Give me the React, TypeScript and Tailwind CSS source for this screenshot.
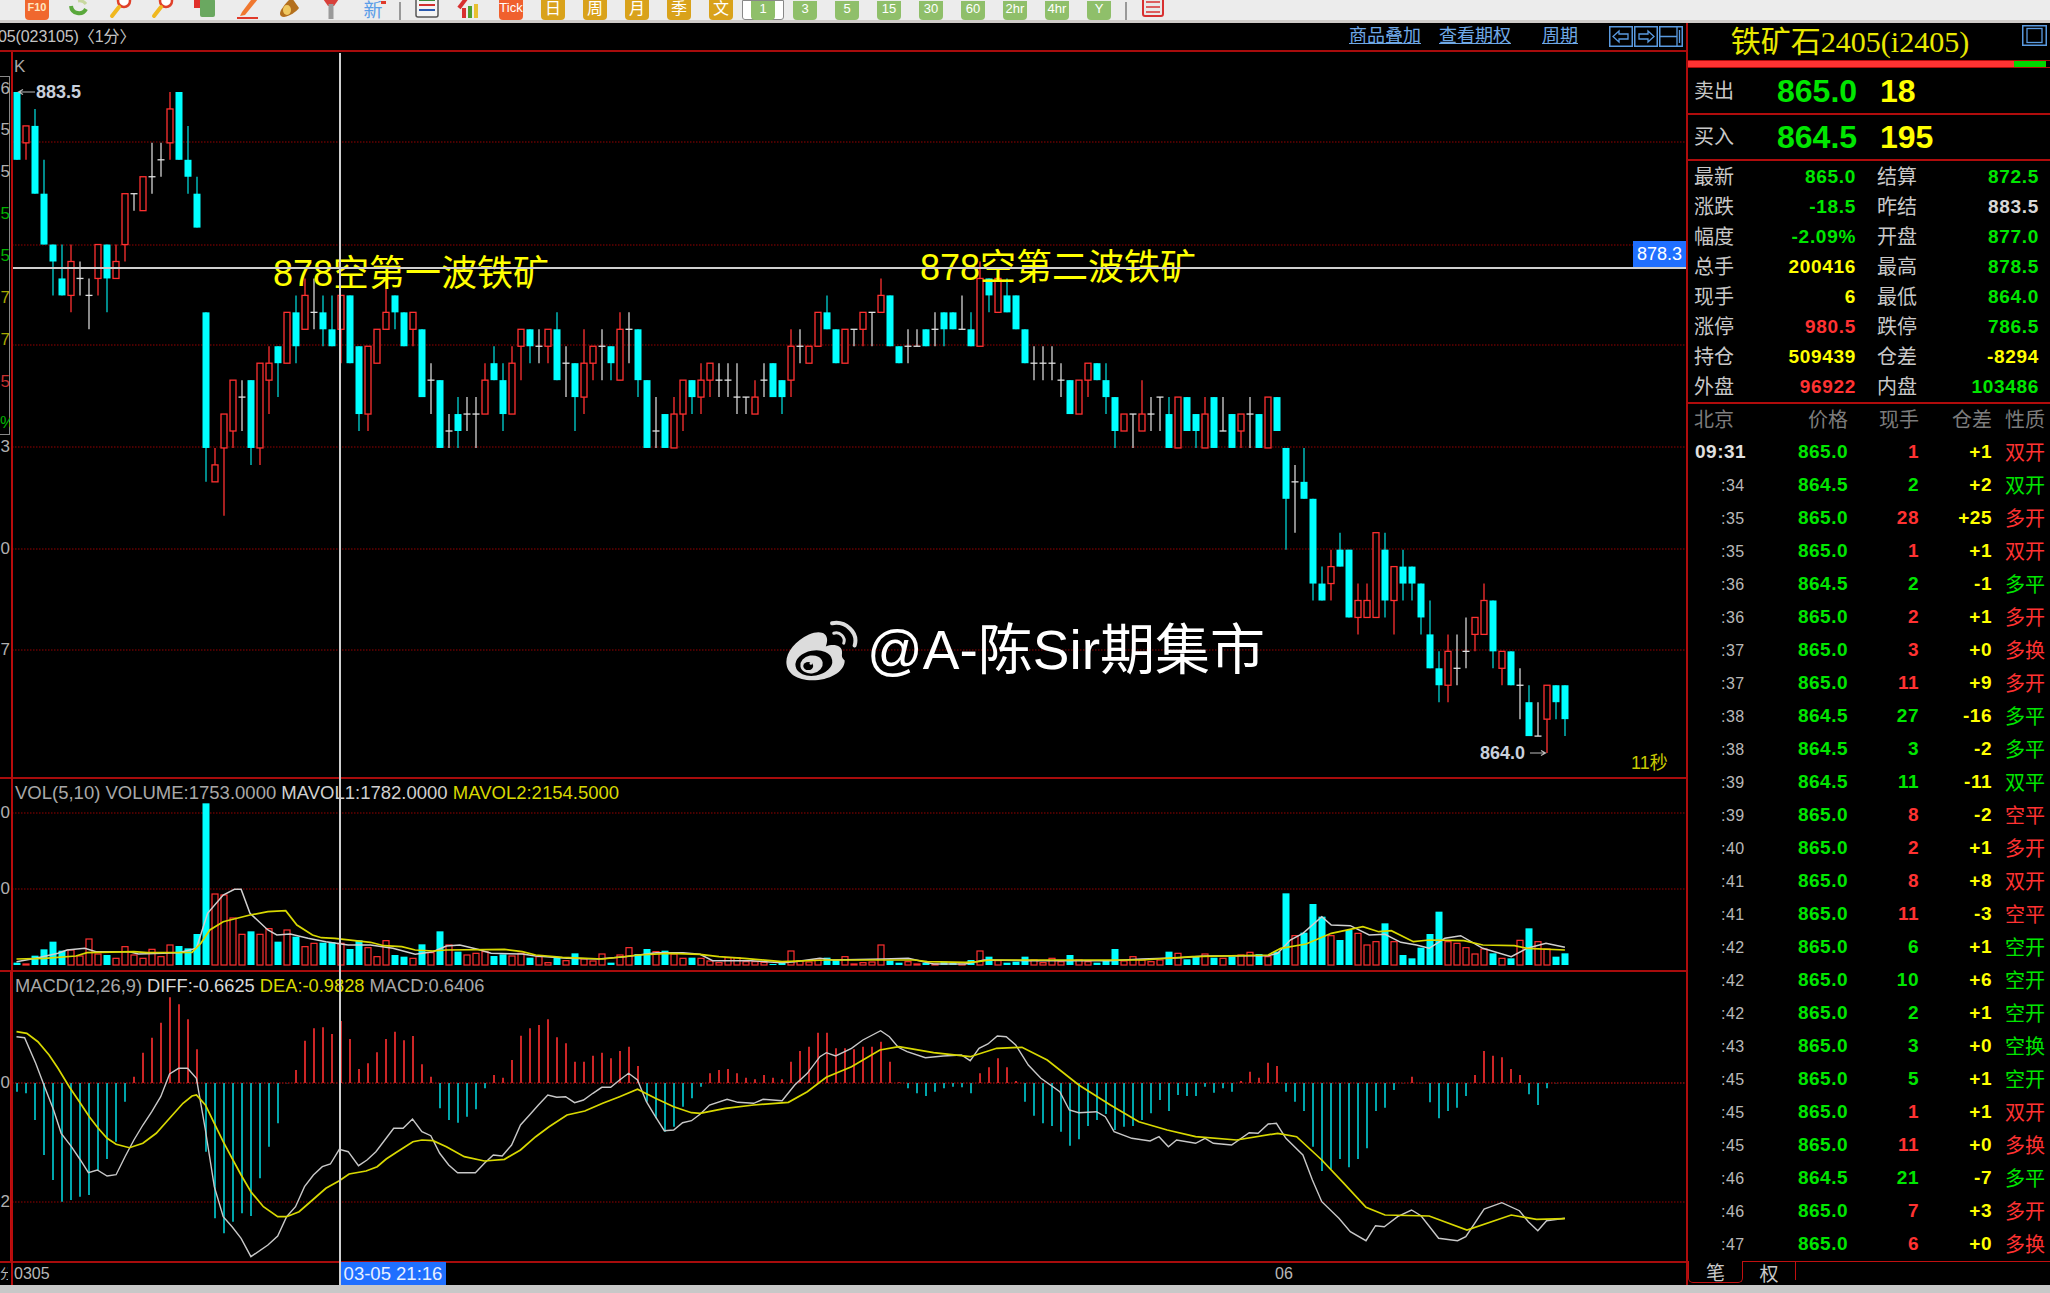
import type { ReactNode } from 'react';

type Candle = [string, number, number, number?, number?];

// body top, body bottom, wick top, wick bottom, all in 0.5-price ticks below 883.5
const candles: Candle[] = [
  ['c',0,4],['r',2,3,2,4],['c',2,6,1,6],['c',6,9,4,9],['c',9,10,9,12],['c',11,12,9,12],['r',10,12,9,13],['w',11,11,10,12],['w',12,12,11,14],['r',9,11,9,12],
  ['c',9,11,9,13],['r',10,11,9,11],['r',6,9,6,10],['w',6,6,6,7],['r',5,7],['w',5,5,3,6],['w',4,4,3,5],['r',1,3,0,4],['c',0,4],['c',4,5,2,6],
  ['c',6,8,5,8],['c',13,21,13,23],['r',22,23,21,23],['r',19,21,19,25],['r',17,20,17,21],['w',18,18,17,20],['c',17,21,17,22],['r',16,21,16,22],['r',16,17,15,19],['c',15,16,15,18],
  ['r',13,16],['c',13,15,12,16],['r',12,14,11,14],['w',13,13,11,14],['c',13,14,12,15],['c',14,15,12,15],['r',12,14,12,16],['c',12,16],['c',15,19,15,20],['r',15,19,15,20],
  ['r',14,16],['r',13,14,11,14],['c',12,13,12,14],['c',13,15],['r',13,14,13,15],['c',14,18],['w',17,17,16,19],['c',17,21],['w',20,20,19,21],['c',19,20,18,21],
  ['w',19,19,18,20],['w',19,19,18,21],['r',17,19,16,19],['c',16,17,15,17],['c',17,19,16,20],['r',16,19,15,19],['r',14,15,14,17],['c',14,15,14,16],['w',15,15,14,16],['r',14,15,14,16],
  ['c',14,17,13,17],['w',16,16,15,18],['c',16,18,16,20],['r',16,18,14,19],['r',15,16,15,17],['w',15,15,14,17],['c',15,16,15,17],['r',14,17,13,17],['w',14,14,13,16],['c',14,17,14,18],
  ['c',17,21],['w',20,20,18,21],['c',19,21],['r',19,21,18,21],['r',17,19,17,20],['c',17,18,17,19],['r',17,18,16,19],['r',16,17,16,18],['w',17,17,16,18],['w',17,17,16,18],
  ['w',18,18,16,19],['w',18,18,18,19],['r',18,19,17,19],['w',17,17,16,18],['c',16,18],['c',17,18,17,19],['r',15,17,14,18],['w',15,15,14,16],['r',15,16],['r',13,15],
  ['c',13,14,12,14],['c',14,16],['r',14,16],['w',14,14,14,15],['r',13,14,13,15],['w',13,13,13,15],['r',12,13,11,13],['c',12,15],['c',15,16],['w',15,15,14,16],
  ['w',15,15,14,15],['c',14,15],['w',14,14,13,15],['c',13,14,13,15],['c',13,14],['w',14,14,12,14],['c',14,15,13,15],['r',11,15,10,15],['c',11,12,11,13],['r',11,13],
  ['c',12,13,11,13],['c',12,14],['c',14,16],['w',16,16,15,17],['w',16,16,15,17],['w',16,16,15,17],['w',17,17,16,18],['c',17,19],['r',17,19],['r',16,17,16,18],
  ['c',16,17],['c',17,18,16,19],['c',18,20,18,21],['r',19,20],['w',19,19,19,21],['r',19,20,17,20],['w',19,19,18,20],['w',18,18,18,20],['c',19,21,18,21],['r',18,21],
  ['c',18,20],['c',19,20,19,21],['r',19,21,18,21],['c',18,21],['w',20,20,18,20],['c',19,21],['r',19,20,19,21],['w',19,19,18,21],['c',19,21],['r',18,21],
  ['c',18,20],['c',21,24,21,27],['w',23,23,22,26],['c',23,24,21,24],['c',24,29,24,30],['c',29,30,28,30],['r',28,29,27,30],['c',27,28,26,28],['c',27,31],['r',30,31,29,32],
  ['r',30,31,29,31],['r',26,31],['c',27,30,26,31],['r',28,30,28,32],['c',28,29,27,30],['c',28,29,28,30],['c',29,31,29,32],['c',32,34,30,34],['c',34,35,33,36],['r',33,35,32,36],
  ['w',34,34,32,35],['w',33,33,31,34],['r',31,32,31,33],['r',30,32,29,32],['c',30,33,30,34],['r',33,34,33,35],['c',33,35],['w',35,35,34,37],['c',36,38,35,38],['w',38,38,36,38],
  ['r',35,37,35,39],['c',35,36,35,37],['c',35,37,35,38],
];

// tops of the volume bars and the tips of the MACD bars, read off the reference
const volTops = [
  578,582,557,538,515,542,540,558,507,552,555,565,530,555,565,538,560,525,528,535,492,100,372,375,444,493,484,493,476,515,
  480,500,530,520,518,517,520,537,511,533,560,512,555,560,565,523,548,484,525,545,555,550,545,558,553,558,550,563,560,578,
  563,572,550,567,573,552,578,555,533,552,537,545,542,552,565,563,565,573,578,563,563,575,575,577,582,578,543,572,576,570,
  563,570,560,582,578,576,525,572,578,575,582,578,582,575,578,578,570,543,560,572,578,575,560,570,578,565,575,555,570,575,
  578,572,537,573,560,570,575,570,545,550,568,560,552,563,565,560,555,547,552,560,545,370,497,488,402,440,497,510,480,490,
  525,515,460,515,555,565,533,492,425,515,520,533,552,537,550,565,565,511,475,515,537,560,550,
];

const macdTips = [
  365,370,450,555,630,695,690,680,675,600,567,515,395,320,248,203,158,82,103,148,238,545,745,790,755,730,738,625,530,460,
  340,300,212,175,172,192,153,207,297,280,247,207,185,211,198,283,320,415,450,458,440,418,355,315,323,270,197,175,165,148,
  202,220,275,275,257,248,265,243,230,288,395,445,485,470,410,385,350,310,300,297,310,323,328,315,323,328,275,243,230,188,
  188,235,235,238,230,230,215,275,337,355,370,378,365,355,350,352,370,310,292,265,292,333,395,437,460,468,485,527,508,468,
  450,432,480,470,468,450,430,390,423,375,378,378,350,368,355,365,333,305,323,278,288,365,395,423,530,603,597,567,592,567,
  535,423,413,360,340,320,340,397,445,423,413,378,315,243,257,262,297,315,373,405,355,340,338,
];

// MA lines, traced from the reference crops: pairs of crop x, crop y
const volWhiteA = [37,575,80,565,130,550,150,540,190,535,215,545,290,545,310,552,400,548,440,535,465,430,500,375,525,358,540,358,560,430,600,480,620,495,650,492,690,505,730,515,780,525,830,525,880,535,930,553,970,545,1000,528,1030,525,1070,538,1100,550,1170,552,1200,558,1270,565,1340,567,1400,560,1470,548,1530,548,1568,553];
const volYellowA = [37,567,100,565,170,558,195,548,300,545,330,548,430,547,450,520,470,480,500,455,560,435,600,425,640,422,665,465,700,495,720,503,750,505,830,517,860,527,900,530,930,540,970,543,1000,540,1130,538,1170,545,1200,555,1260,562,1350,567,1430,555,1500,550,1568,553];
const volWhiteB = [0,565,20,572,80,572,130,578,150,575,190,565,210,570,290,567,330,565,370,582,420,582,450,570,520,572,650,572,700,567,760,563,800,558,900,557,915,550,935,510,955,490,985,440,1000,465,1030,467,1060,495,1085,493,1110,517,1135,525,1155,535,1180,505,1205,497,1240,535,1285,560,1310,535,1340,520,1370,532];
const volYellowB = [0,552,30,560,70,565,130,575,200,570,340,570,360,575,420,577,440,575,460,570,700,570,780,560,900,555,920,535,960,522,1000,490,1050,470,1075,485,1095,482,1130,515,1155,510,1210,512,1240,525,1290,527,1310,535,1370,540];
const macdWhiteA = [37,200,55,203,80,280,100,350,120,420,137,490,160,530,180,570,198,608,218,600,240,618,260,614,280,560,300,510,320,465,340,425,360,380,380,312,400,295,420,295,440,325,460,480,480,650,500,740,520,770,540,805,562,860,600,825,622,798,642,740,662,710,682,650,702,615,722,590,740,582,760,538,780,545,803,587,822,570,842,545,862,510,882,475,903,475,924,447,945,485,965,497,985,550,1005,585,1025,608,1065,608,1085,580,1105,555,1125,558,1146,525,1166,465,1186,435,1206,405,1227,375,1247,382,1267,380,1287,398,1307,390,1328,370,1348,352,1368,352,1388,330,1408,310,1428,330,1448,395,1468,440,1488,482,1509,480,1529,458,1549,452,1568,433];
const macdYellowA = [37,185,60,190,85,215,110,255,130,295,155,350,180,400,200,440,220,475,240,505,260,523,290,533,320,520,350,490,380,445,410,400,430,378,440,375,460,405,480,460,500,515,520,565,540,615,562,665,590,710,622,740,642,740,670,725,700,690,730,655,760,632,782,612,820,603,845,590,865,567,890,545,925,515,945,510,970,512,1000,530,1040,560,1085,573,1130,568,1166,540,1200,500,1230,470,1270,435,1310,423,1350,400,1388,380,1428,358,1468,385,1509,410,1549,428,1568,430];
const macdWhiteB = [0,435,15,405,43,388,60,397,85,400,100,388,130,392,150,345,170,310,190,260,200,248,215,258,240,235,258,210,286,182,300,200,314,232,328,245,357,263,385,258,414,255,428,272,442,235,456,222,471,198,485,200,500,225,520,285,540,325,570,365,585,420,600,428,628,425,642,440,656,485,684,505,713,513,727,500,742,530,755,510,785,520,800,505,813,520,842,525,870,488,884,490,900,462,913,460,928,505,955,555,970,630,985,695,1012,745,1030,785,1055,812,1070,767,1084,770,1105,740,1127,720,1142,737,1170,805,1200,812,1213,800,1242,717,1270,698,1298,722,1312,755,1327,782,1341,752,1370,745];
const macdYellowB = [0,430,40,415,85,405,140,397,170,365,200,322,240,290,285,240,315,230,370,248,428,260,470,235,510,232,550,270,600,345,650,405,695,455,740,480,785,500,850,510,915,490,945,500,985,570,1020,640,1055,712,1085,735,1155,738,1215,780,1285,735,1325,748,1370,746];

const barX = (i: number) => Math.round(16.6 + 9 * i);
const tickY = (n: number) => 92 + 16.95 * n;

function tracePoints(a: number[], b: number[], top: number) {
  const out: string[] = [];
  for (let i = 0; i < a.length; i += 2) out.push(`${(a[i] / 2.24).toFixed(1)},${(top + a[i + 1] / 3).toFixed(1)}`);
  for (let i = 0; i < b.length; i += 2) {
    const x = 700 + b[i] / 1.584;
    if (x > 700) out.push(`${x.toFixed(1)},${(top + b[i + 1] / 3).toFixed(1)}`);
  }
  return out.join(' ');
}

function GridLine({ y }: { y: number }) {
  return <line x1={12} x2={1686} y1={y} y2={y} stroke="#960000" strokeWidth={1} strokeDasharray="1.5 1.5" />;
}

function KPane() {
  const wickColor: Record<string, string> = { c: '#00d4d4', r: '#ff3030', w: '#d4d4d4' };
  return (
    <svg viewBox="0 52 1686 725" className="absolute inset-0 w-[1686px] h-[725px]">
      {[142, 245, 345, 447, 549, 650].map((y) => <GridLine key={y} y={y} />)}
      {candles.map(([t, top, bot, wt, wb], i) => {
        const x = barX(i);
        const y1 = tickY(top);
        const y2 = tickY(bot);
        const upper = tickY(wt ?? top);
        const lower = tickY(wb ?? bot);
        return (
          <g key={i}>
            <line x1={x} x2={x} y1={upper} y2={lower} stroke={wickColor[t]} strokeWidth={1.3} />
            {t === 'c' && <rect x={x - 3.5} y={y1} width={7} height={y2 - y1} fill="#00ffff" />}
            {t === 'r' && <rect x={x - 3} y={y1} width={6} height={y2 - y1} fill="#000" stroke="#ff3030" strokeWidth={1.3} />}
            {t === 'w' && <line x1={x - 3.5} x2={x + 3.5} y1={y1} y2={y1} stroke="#e0e0e0" strokeWidth={1.3} />}
          </g>
        );
      })}
      <path d="M35 92H19M23 89.5L18.5 92L23 94.5" fill="none" stroke="#bbb" strokeWidth={1.2} />
      <path d="M1530 753H1545M1541 750.5L1545.5 753L1541 755.5" fill="none" stroke="#bbb" strokeWidth={1.2} />
    </svg>
  );
}

function VolumePane() {
  return (
    <svg viewBox="0 779 1686 191" className="absolute inset-0 w-[1686px] h-[191px]">
      {[813, 889].map((y) => <GridLine key={y} y={y} />)}
      {candles.map(([t], i) => {
        const top = 770 + (volTops[i] ?? 585) / 3;
        const x = barX(i);
        return t === 'c' ? (
          <rect key={i} x={x - 3.5} y={top} width={7} height={965 - top} fill="#00ffff" />
        ) : (
          <rect key={i} x={x - 3} y={top} width={6} height={965 - top} fill="#000" stroke="#ff3030" strokeWidth={1.2} />
        );
      })}
      <polyline points={tracePoints(volWhiteA, volWhiteB, 770)} fill="none" stroke="#d0d0d0" strokeWidth={1.5} />
      <polyline points={tracePoints(volYellowA, volYellowB, 770)} fill="none" stroke="#d8d800" strokeWidth={1.7} />
    </svg>
  );
}

function MacdPane() {
  return (
    <svg viewBox="0 972 1686 289" className="absolute inset-0 w-[1686px] h-[289px]">
      <GridLine y={1202} />
      {macdTips.map((z, i) => (
        <line key={i} x1={barX(i)} x2={barX(i)} y1={1083} y2={970 + z / 3} stroke={z < 340 ? '#ff3030' : '#00d0d8'} strokeWidth={1.6} />
      ))}
      <line x1={12} x2={1686} y1={1083} y2={1083} stroke="#d01010" strokeWidth={1} strokeDasharray="1.5 1.5" />
      <polyline points={tracePoints(macdWhiteA, macdWhiteB, 970)} fill="none" stroke="#c8c8c8" strokeWidth={1.4} />
      <polyline points={tracePoints(macdYellowA, macdYellowB, 970)} fill="none" stroke="#d8d800" strokeWidth={1.7} />
    </svg>
  );
}

function WeiboLogo() {
  return (
    <svg viewBox="70 45 230 190" className="w-[77px] h-[63px]">
      <path d="M82 175C82 145 110 110 150 92C180 78 205 85 205 108C205 115 203 122 201 128C225 118 250 125 250 145C250 155 247 160 258 170C258 205 210 230 160 230C115 230 82 210 82 175Z" fill="#dcdcdc" />
      <ellipse cx={165} cy={178} rx={56} ry={38} transform="rotate(-10 165 178)" fill="#000" />
      <ellipse cx={158} cy={182} rx={34} ry={27} transform="rotate(-10 158 182)" fill="#dcdcdc" />
      <ellipse cx={148} cy={187} rx={15} ry={12} fill="#000" />
      <circle cx={156} cy={179} r={4} fill="#dcdcdc" />
      <path d="M220 58C260 50 300 85 288 125" fill="none" stroke="#dcdcdc" strokeWidth={12} strokeLinecap="round" />
      <path d="M225 88C243 82 262 100 255 118" fill="none" stroke="#dcdcdc" strokeWidth={9} strokeLinecap="round" />
    </svg>
  );
}

// toolbar ---------------------------------------------------------------------

function Cell({ children, w = 'w-[42px]' }: { children: ReactNode; w?: string }) {
  return <div className={`${w} h-[20px] flex items-end justify-center shrink-0 overflow-hidden`}>{children}</div>;
}

function Glyph({ children }: { children: ReactNode }) {
  return <svg viewBox="0 0 26 24" className="w-[26px] h-[24px] shrink-0">{children}</svg>;
}

function GoldKey({ label }: { label: string }) {
  return (
    <div className="w-[24px] h-[20px] rounded-b-[4px] bg-[#d9a21b] text-white text-[16px] leading-[17px] text-center">{label}</div>
  );
}

function GreenKey({ label }: { label: string }) {
  return (
    <div className="w-[24px] h-[19px] rounded-b-[4px] bg-[#8fbf6a] text-white text-[13px] leading-[15px] text-center">{label}</div>
  );
}

function Toolbar() {
  return (
    <div className="h-[20px] bg-[#ececec] flex pl-[16px] overflow-hidden shrink-0">
      <Cell>
        <div className="w-[24px] h-[20px] rounded-b-[4px] bg-[#f0682e] text-[#ffe6c0] text-[11px] leading-[14px] text-center font-bold">F10</div>
      </Cell>
      <Cell>
        <Glyph>
          <path d="M5 10a8 8 0 0 0 15 3" fill="none" stroke="#5aa83c" strokeWidth={4} />
          <path d="M20 8a8 8 0 0 0-8-3" fill="none" stroke="#c8d8a0" strokeWidth={3} />
        </Glyph>
      </Cell>
      {[0, 1].map((k) => (
        <Cell key={k}>
          <Glyph>
            <circle cx={16} cy={5} r={6} fill="#fff" stroke="#e0402a" strokeWidth={2.5} />
            <path d="M11 11L4 20" stroke="#f0b820" strokeWidth={4} strokeLinecap="round" />
          </Glyph>
        </Cell>
      ))}
      <Cell>
        <Glyph>
          <rect x={2} y={0} width={12} height={12} fill="#e0302a" />
          <rect x={8} y={3} width={15} height={18} rx={2} fill="#6aa860" />
        </Glyph>
      </Cell>
      <Cell>
        <Glyph>
          <path d="M8 16L20 0L24 3L11 19L6 20Z" fill="#f07830" />
          <path d="M3 22H24" stroke="#e03a2a" strokeWidth={2} />
        </Glyph>
      </Cell>
      <Cell>
        <Glyph>
          <path d="M5 14C9 8 12 4 16 2L23 12C20 16 14 20 8 21C4 21 3 18 5 14Z" fill="#b4701e" />
          <ellipse cx={11} cy={14} rx={4} ry={5} fill="#f0c860" />
        </Glyph>
      </Cell>
      <Cell>
        <Glyph>
          <path d="M3 0H23L16 10H10Z" fill="#d8403a" />
          <path d="M13 8V23" stroke="#9a9a9a" strokeWidth={5} />
        </Glyph>
      </Cell>
      <Cell>
        <div className="relative text-[#5b9ee8] text-[19px] leading-[19px]">
          新
          <div className="absolute -right-[3px] top-0 w-[5px] h-[3px] bg-[#e03a2a]" />
        </div>
      </Cell>
      <Cell w="w-[12px]">
        <div className="w-[2px] h-[18px] bg-[#999]" />
      </Cell>
      <Cell>
        <Glyph>
          <rect x={2} y={-3} width={22} height={24} rx={2} fill="#f4f4f4" stroke="#555" strokeWidth={1.5} />
          <path d="M5 4H21" stroke="#3a8a3a" strokeWidth={2} />
          <path d="M5 9H21" stroke="#d03030" strokeWidth={2} />
          <path d="M5 14H21" stroke="#2a5ab0" strokeWidth={2} />
        </Glyph>
      </Cell>
      <Cell>
        <Glyph>
          <rect x={6} y={12} width={4} height={10} fill="#d83030" />
          <rect x={12} y={10} width={4} height={12} fill="#50a030" />
          <rect x={18} y={8} width={4} height={14} fill="#e8c030" />
          <path d="M3 12L12 0" stroke="#d83030" strokeWidth={4} />
        </Glyph>
      </Cell>
      <Cell>
        <div className="w-[24px] h-[20px] rounded-b-[4px] bg-[#f0602e] text-white text-[13px] leading-[15px] text-center">Tick</div>
      </Cell>
      {['日', '周', '月', '季', '文'].map((t) => (
        <Cell key={t}><GoldKey label={t} /></Cell>
      ))}
      <Cell>
        <div className="w-[42px] h-[20px] border border-[#888] rounded-b-[3px] bg-white flex justify-center">
          <GreenKey label="1" />
        </div>
      </Cell>
      {['3', '5', '15', '30', '60', '2hr', '4hr', 'Y'].map((t) => (
        <Cell key={t}><GreenKey label={t} /></Cell>
      ))}
      <Cell w="w-[12px]">
        <div className="w-[2px] h-[18px] bg-[#999]" />
      </Cell>
      <Cell>
        <Glyph>
          <rect x={3} y={-3} width={20} height={23} rx={2} fill="#e8e8e8" stroke="#d83030" strokeWidth={2} />
          <path d="M6 6H20M6 11H20M6 16H20" stroke="#d83030" strokeWidth={1.5} />
        </Glyph>
      </Cell>
    </div>
  );
}

// left column -----------------------------------------------------------------

function BoxBtn({ children }: { children: ReactNode }) {
  return (
    <svg viewBox="0 0 24 21" className="w-[24px] h-[21px] shrink-0">
      <rect x={0.75} y={0.75} width={22.5} height={19.5} fill="none" stroke="#5a9ae0" strokeWidth={1.5} />
      {children}
    </svg>
  );
}

function ChartHeader() {
  return (
    <div className="h-[29px] flex items-center border-b-2 border-[#a80c0c] shrink-0 text-[18px]">
      <div className="text-[#c4c4c4] -ml-[2px] w-[1351px] text-[16px] tracking-[-0.1px]">05(023105)〈1分〉</div>
      <a className="text-[#6fa8e6] underline w-[90px]">商品叠加</a>
      <a className="text-[#6fa8e6] underline w-[103px]">查看期权</a>
      <a className="text-[#6fa8e6] underline w-[67px]">周期</a>
      <div className="flex gap-[1px]">
        <BoxBtn><path d="M4 10.5L10 5V8H19V13H10V16Z" fill="none" stroke="#5a9ae0" strokeWidth={1.3} /></BoxBtn>
        <BoxBtn><path d="M20 10.5L14 5V8H5V13H14V16Z" fill="none" stroke="#5a9ae0" strokeWidth={1.3} /></BoxBtn>
        <BoxBtn><path d="M1 10.5H18M18 1V20M20.5 4V17" fill="none" stroke="#5a9ae0" strokeWidth={1.3} /></BoxBtn>
      </div>
    </div>
  );
}

function AxisMark({ y, label, color = 'text-[#b0b0b0]' }: { y: string; label: string; color?: string }) {
  return <div className={`absolute left-0 w-[10px] overflow-hidden text-right text-[17px] leading-[20px] ${y} ${color}`}>{label}</div>;
}

function ChartColumn() {
  return (
    <div className="relative w-[1686px] flex flex-col shrink-0">
      <ChartHeader />
      <div className="relative h-[725px] border-b-2 border-[#a80c0c] box-content shrink-0">
        <KPane />
        <div className="absolute left-0 top-[24px] w-[10px] h-[359px] border border-l-0 border-[#888]" />
        <AxisMark y="top-[27px]" label="6" />
        <AxisMark y="top-[68px]" label="5" />
        <AxisMark y="top-[110px]" label="5" />
        <AxisMark y="top-[152px]" label="5" color="text-[#00b000]" />
        <AxisMark y="top-[194px]" label="5" color="text-[#00b000]" />
        <AxisMark y="top-[236px]" label="7" color="text-[#a8a800]" />
        <AxisMark y="top-[278px]" label="7" color="text-[#a8a800]" />
        <AxisMark y="top-[320px]" label="5" color="text-[#c83030]" />
        <AxisMark y="top-[361px]" label="%" color="text-[#00b000]" />
        <AxisMark y="top-[385px]" label="3" />
        <AxisMark y="top-[487px]" label="0" />
        <AxisMark y="top-[588px]" label="7" />
        <div className="absolute left-[14px] top-[5px] text-[#a8a8a8] text-[17px] leading-[20px]">K</div>
        <div className="absolute left-[36px] top-[30px] text-[#c8d0dc] text-[18px] leading-[20px] font-bold">883.5</div>
        <div className="absolute left-[1480px] top-[691px] text-[#c8d0dc] text-[18px] leading-[20px] font-bold">864.0</div>
        <div className="absolute left-[1631px] top-[701px] text-[#c8c800] text-[18px] leading-[20px]">11秒</div>
        <div className="absolute left-[273px] top-[196px] text-[#ffff00] text-[36px] leading-[52px] whitespace-nowrap">878空第一波铁矿</div>
        <div className="absolute left-[920px] top-[190px] text-[#ffff00] text-[36px] leading-[52px] whitespace-nowrap">878空第二波铁矿</div>
        <div className="absolute left-[12px] right-0 top-[215px] h-[1.5px] bg-[#cfcfcf]" />
        <div className="absolute left-[1633px] top-[189px] w-[53px] h-[26px] bg-[#1f6fff] text-white text-[18px] leading-[26px] text-center">878.3</div>
        <div className="absolute left-[782px] top-[567px] flex items-center gap-[8px] text-white text-[55px] leading-[63px] whitespace-nowrap">
          <WeiboLogo />
          <span>@A-陈Sir期集市</span>
        </div>
      </div>
      <div className="relative h-[191px] border-b-2 border-[#a80c0c] box-content shrink-0">
        <VolumePane />
        <AxisMark y="top-[24px]" label="0" />
        <AxisMark y="top-[100px]" label="0" />
        <div className="absolute left-[15px] top-[3px] text-[18.5px] leading-[22px] whitespace-nowrap">
          <span className="text-[#a8a8a8]">VOL(5,10) VOLUME:1753.0000 </span>
          <span className="text-[#d0d0d0]">MAVOL1:1782.0000 </span>
          <span className="text-[#d8d800]">MAVOL2:2154.5000</span>
        </div>
      </div>
      <div className="relative h-[289px] border-b-2 border-[#a80c0c] box-content shrink-0">
        <MacdPane />
        <AxisMark y="top-[101px]" label="0" />
        <AxisMark y="top-[220px]" label="2" />
        <div className="absolute left-[15px] top-[3px] text-[18.3px] leading-[22px] whitespace-nowrap">
          <span className="text-[#a8a8a8]">MACD(12,26,9) </span>
          <span className="text-[#d8d8d8]">DIFF:-0.6625 </span>
          <span className="text-[#d8d800]">DEA:-0.9828 </span>
          <span className="text-[#a8a8a8]">MACD:0.6406</span>
        </div>
        <div className="absolute left-[10px] top-0 bottom-0 w-[3px] bg-[#c01010]" />
      </div>
      <div className="relative h-[22px] text-[#b8b8b8] text-[16px] leading-[22px]">
        <div className="absolute left-0 top-0 text-[13px] w-[8px] overflow-hidden">分</div>
        <div className="absolute left-[14px] top-0">0305</div>
        <div className="absolute left-[340px] top-0 w-[106px] h-[24px] -mt-[1px] bg-[#1f6fff] text-[#e8f0ff] text-center text-[18.5px] leading-[24px]">03-05 21:16</div>
        <div className="absolute left-[1275px] top-0">06</div>
      </div>
      {/* chart axis rule and crosshair lie over the panes */}
      <div className="absolute left-[11px] top-[29px] bottom-0 w-[1.5px] bg-[#b80c0c]" />
      <div className="absolute left-[339px] top-[30px] bottom-0 w-[1.5px] bg-[#cfcfcf]" />
    </div>
  );
}

// right column ----------------------------------------------------------------

const stats: [string, string, string, string, string, string][] = [
  ['最新', '865.0', 'text-[#00e600]', '结算', '872.5', 'text-[#00e600]'],
  ['涨跌', '-18.5', 'text-[#00e600]', '昨结', '883.5', 'text-[#d8d8d8]'],
  ['幅度', '-2.09%', 'text-[#00e600]', '开盘', '877.0', 'text-[#00e600]'],
  ['总手', '200416', 'text-[#ffff00]', '最高', '878.5', 'text-[#00e600]'],
  ['现手', '6', 'text-[#ffff00]', '最低', '864.0', 'text-[#00e600]'],
  ['涨停', '980.5', 'text-[#ff3232]', '跌停', '786.5', 'text-[#00e600]'],
  ['持仓', '509439', 'text-[#ffff00]', '仓差', '-8294', 'text-[#ffff00]'],
  ['外盘', '96922', 'text-[#ff3232]', '内盘', '103486', 'text-[#00e600]'],
];

const trades: [string, string, string, string, string, boolean][] = [
  ['09:31', '865.0', '1', '+1', '双开', true],
  [':34', '864.5', '2', '+2', '双开', false],
  [':35', '865.0', '28', '+25', '多开', true],
  [':35', '865.0', '1', '+1', '双开', true],
  [':36', '864.5', '2', '-1', '多平', false],
  [':36', '865.0', '2', '+1', '多开', true],
  [':37', '865.0', '3', '+0', '多换', true],
  [':37', '865.0', '11', '+9', '多开', true],
  [':38', '864.5', '27', '-16', '多平', false],
  [':38', '864.5', '3', '-2', '多平', false],
  [':39', '864.5', '11', '-11', '双平', false],
  [':39', '865.0', '8', '-2', '空平', true],
  [':40', '865.0', '2', '+1', '多开', true],
  [':41', '865.0', '8', '+8', '双开', true],
  [':41', '865.0', '11', '-3', '空平', true],
  [':42', '865.0', '6', '+1', '空开', false],
  [':42', '865.0', '10', '+6', '空开', false],
  [':42', '865.0', '2', '+1', '空开', false],
  [':43', '865.0', '3', '+0', '空换', false],
  [':45', '865.0', '5', '+1', '空开', false],
  [':45', '865.0', '1', '+1', '双开', true],
  [':45', '865.0', '11', '+0', '多换', true],
  [':46', '864.5', '21', '-7', '多平', false],
  [':46', '865.0', '7', '+3', '多开', true],
  [':47', '865.0', '6', '+0', '多换', true],
];

function QuoteRow({ label, price, qty, h }: { label: string; price: string; qty: string; h: string }) {
  return (
    <div className={`${h} flex items-center pl-[6px] border-b-2 border-[#b00c0c] shrink-0`}>
      <span className="w-[83px] text-[#c8c8c8] text-[20px]">{label}</span>
      <span className="w-[103px] text-[#00e600] text-[32px] font-bold">{price}</span>
      <span className="text-[#ffff00] text-[32px] font-bold">{qty}</span>
    </div>
  );
}

function QuotePanel() {
  return (
    <div className="w-[362px] flex flex-col shrink-0">
      <div className="relative h-[37px] flex items-center justify-center pr-[38px] text-[#e8e800] text-[30px] font-['Liberation_Serif','Noto_Sans_CJK_SC',serif] shrink-0">
        铁矿石2405(i2405)
        <svg viewBox="0 0 25 21" className="absolute right-[3px] top-[2px] w-[25px] h-[21px]">
          <rect x={0.75} y={0.75} width={23.5} height={19.5} fill="none" stroke="#5a9ae0" strokeWidth={1.5} />
          <rect x={5} y={3.5} width={15} height={14} fill="none" stroke="#5a9ae0" strokeWidth={1.3} />
        </svg>
      </div>
      <div className="h-[8px] flex border-y border-[#b00c0c] shrink-0">
        <div className="w-[326px] bg-[#ff3232]" />
        <div className="w-[32px] bg-[#00d800]" />
      </div>
      <QuoteRow label="卖出" price="865.0" qty="18" h="h-[47px]" />
      <QuoteRow label="买入" price="864.5" qty="195" h="h-[46px]" />
      <div className="pl-[6px] pt-[1px] border-b-2 border-[#b00c0c] h-[243px] box-border shrink-0 font-bold">
        {stats.map(([a, av, ac, b, bv, bc]) => (
          <div key={a} className="h-[30px] grid grid-cols-[162px_162px] gap-x-[21px] items-center">
            <div className="flex justify-between items-center">
              <span className="text-[#c8c8c8] text-[20px] font-normal">{a}</span>
              <span className={`${ac} text-[19px] tracking-[0.7px]`}>{av}</span>
            </div>
            <div className="flex justify-between items-center">
              <span className="text-[#c8c8c8] text-[20px] font-normal">{b}</span>
              <span className={`${bc} text-[19px] tracking-[0.7px]`}>{bv}</span>
            </div>
          </div>
        ))}
      </div>
      <div className="h-[32px] grid grid-cols-[72px_88px_71px_73px_1fr] items-center text-[#7c7c7c] text-[20px] shrink-0">
        <span className="pl-[6px]">北京</span>
        <span className="text-right">价格</span>
        <span className="text-right">现手</span>
        <span className="text-right">仓差</span>
        <span className="pl-[13px]">性质</span>
      </div>
      {trades.map(([time, price, hand, diff, kind, up], i) => (
        <div key={i} className="h-[33px] grid grid-cols-[72px_88px_71px_73px_1fr] items-center text-[19px] font-bold tracking-[0.5px] shrink-0">
          {i === 0 ? (
            <span className="pl-[7px] text-[#e0e0e0] text-[19px]">{time}</span>
          ) : (
            <span className="pl-[33px] text-[#b8b8b8] text-[16px] font-normal">{time}</span>
          )}
          <span className="text-right text-[#00e600]">{price}</span>
          <span className={`text-right ${up ? 'text-[#ff3232]' : 'text-[#00e600]'}`}>{hand}</span>
          <span className="text-right text-[#ffff00]">{diff}</span>
          <span className={`pl-[13px] text-[20px] font-normal tracking-normal ${up ? 'text-[#ff3232]' : 'text-[#00e600]'}`}>{kind}</span>
        </div>
      ))}
      <div className="h-[24px] flex text-[#c8c8c8] text-[19px] leading-[26px]">
        <div className="w-[55px] h-[22px] border-x border-b border-[#c01010] rounded-b-[5px] text-center">笔</div>
        <div className="flex-1 border-t border-[#c01010] flex">
          <div className="w-[52px] text-center">权</div>
          <div className="w-[1px] h-[18px] bg-[#c01010]" />
        </div>
      </div>
    </div>
  );
}

export default function App() {
  return (
    <div className="w-[2050px] h-[1293px] bg-[#c8c8c8] flex flex-col overflow-hidden font-['Liberation_Sans','Noto_Sans_CJK_SC',sans-serif]">
      <Toolbar />
      <div className="h-[3px] bg-[#cfcbc8] shrink-0" />
      <div className="h-[1262px] bg-black flex shrink-0 overflow-hidden">
        <ChartColumn />
        <div className="w-[2px] bg-[#b00c0c] shrink-0" />
        <QuotePanel />
      </div>
    </div>
  );
}
